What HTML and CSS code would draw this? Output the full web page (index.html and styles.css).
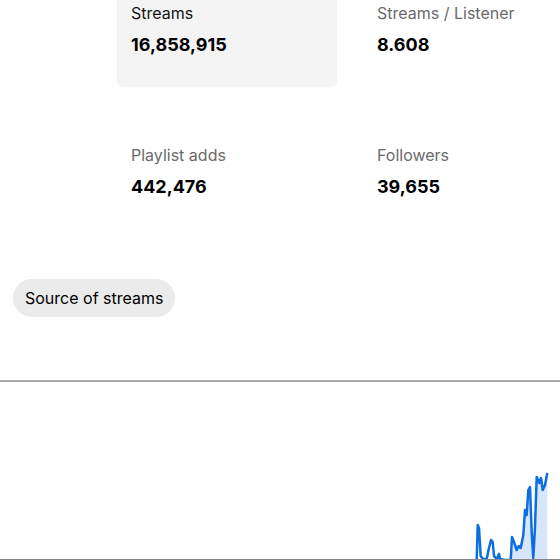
FILE: index.html
```html
<!DOCTYPE html>
<html>
<head>
<meta charset="utf-8">
<link rel="stylesheet" href="styles.css">
</head>
<body>
<div class="page">
  <div class="stats">
    <div class="stat active">
      <div class="label">Streams</div>
      <div class="value">16,858,915</div>
    </div>
    <div class="stat">
      <div class="label">Streams / Listener</div>
      <div class="value">8.608</div>
    </div>
    <div class="stat">
      <div class="label">Playlist adds</div>
      <div class="value">442,476</div>
    </div>
    <div class="stat">
      <div class="label">Followers</div>
      <div class="value">39,655</div>
    </div>
  </div>
  <div class="chips">
    <button class="chip">Source of streams</button>
  </div>
  <div class="chart">
    <svg width="560" height="178" viewBox="0 382 560 178">
      <path class="area" d="M511,560 L512,537 514,542 516.7,550 518.7,546 520.7,548 523.3,535 525,510 526.7,515 528.3,490 530,487 531.7,533 533.3,558 535,527 536.7,477 539.3,483 541,478 542.7,490 545,485 547.3,473 L547.3,560 Z"/>
      <path class="line" d="M476.7,560 L477.7,525 479,528 480.7,556 483,559 486.7,559 489,548 491,540 492.7,542 494,556 497,559 499,554 500,559 505,560 510.7,560 512,537 514,542 516.7,550 518.7,546 520.7,548 523.3,535 525,510 526.7,515 528.3,490 530,487 531.7,533 533.3,558 535,527 536.7,477 539.3,483 541,478 542.7,490 545,485 547.3,473"/>
      <line class="axis" x1="0" y1="559.5" x2="560" y2="559.5"/>
    </svg>
  </div>
</div>
</body>
</html>
```
FILE: styles.css
```css
html, body {
  margin: 0;
  padding: 0;
  background: #fff;
  font-family: Inter, "Noto Sans", sans-serif;
  overflow: hidden;
}
.page {
  width: 560px;
  height: 560px;
  overflow: hidden;
}
.stats {
  margin-top: -13px;
  margin-left: 117px;
  display: grid;
  grid-template-columns: 220px 196px;
  column-gap: 26px;
  row-gap: 43px;
}
.stat {
  height: 99px;
  box-sizing: border-box;
  padding: 14px 14px;
  border-radius: 6px;
}
.stat.active {
  background: #f4f4f4;
  box-shadow: 0 1px 2px rgba(0,0,0,0.06);
}
.label {
  font-size: 16px;
  line-height: 24px;
  color: #6a6a6a;
  white-space: nowrap;
}
.stat.active .label {
  color: #121212;
}
.value {
  margin-top: 8px;
  font-size: 18px;
  line-height: 24px;
  font-weight: 700;
  color: #000;
}
.chips {
  margin-top: 51px;
  padding-left: 13px;
  display: flex;
}
.chip {
  font-family: inherit;
  font-size: 16px;
  line-height: 22px;
  color: #000;
  background: #ebebeb;
  border: none;
  border-radius: 999px;
  padding: 8px 12px;
  height: 38px;
}
.chart {
  margin-top: 63px;
  border-top: 2px solid #aaa;
}
.chart svg {
  display: block;
}
.area {
  fill: #d7e6fa;
}
.line {
  fill: none;
  stroke: #0b6fe0;
  stroke-width: 2.5;
  stroke-linejoin: round;
}
.axis {
  stroke: #888;
  stroke-width: 1;
}
```
